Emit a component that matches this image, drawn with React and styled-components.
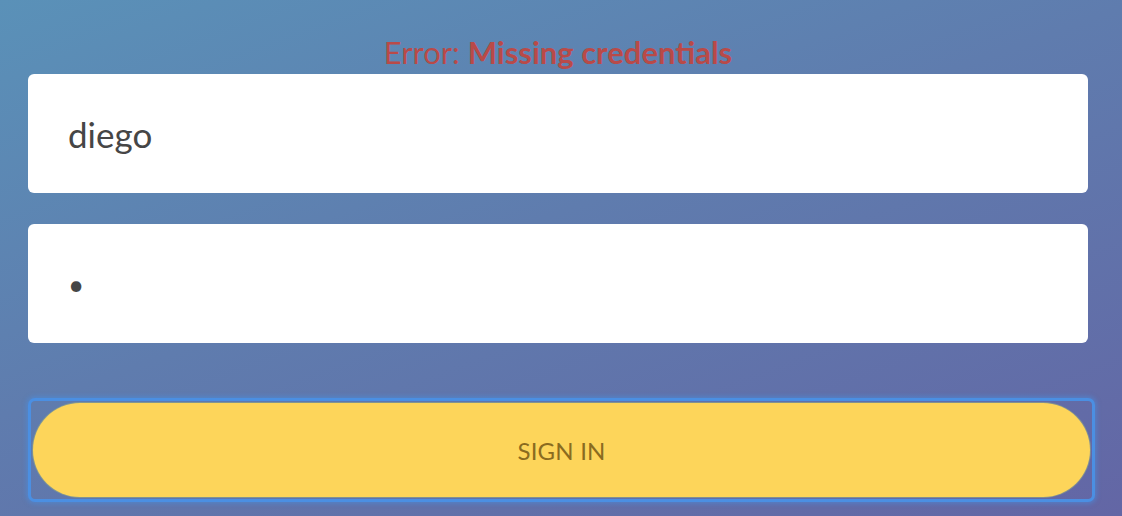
import React from 'react';
import styled, { createGlobalStyle } from 'styled-components';

const GlobalStyle = createGlobalStyle`
  html, body {
    margin: 0;
    padding: 0;
  }
  body {
    font-family: Lato, "Open Sans", sans-serif;
  }
`;

const Page = styled.div`
  width: 1122px;
  height: 516px;
  overflow: hidden;
  box-sizing: border-box;
  padding: 34px 34px 0 28px;
  background: linear-gradient(160deg, #5a91b8 0%, #5f7cae 45%, #6366a5 100%);
`;

const Form = styled.form`
  display: flex;
  flex-direction: column;
  width: 1060px;
`;

const ErrorLine = styled.p`
  margin: 0 0 4px;
  height: 36px;
  line-height: 36px;
  text-align: center;
  font-size: 31px;
  font-weight: 400;
  color: #b94a48;
  & b {
    font-weight: 700;
  }
`;

const Field = styled.input`
  box-sizing: border-box;
  width: 100%;
  height: 119px;
  margin: 0 0 ${(props) => props.$gap}px;
  padding: 0 40px;
  border: none;
  border-radius: 6px;
  background: #fff;
  font-family: Lato, "Open Sans", sans-serif;
  font-size: ${(props) => (props.type === 'password' ? 28 : 35)}px;
  color: #464646;
  outline: none;
`;

const FocusRing = styled.div`
  margin-left: 3px;
  width: 1061px;
  padding: 2px;
  box-sizing: border-box;
  border-radius: 4px;
  box-shadow: 0 0 0 3px #4b8fe2, 0 0 4px 5px rgba(74, 143, 226, 0.5);
`;

const SubmitButton = styled.button`
  display: block;
  width: 100%;
  height: 94px;
  border: none;
  border-radius: 47px;
  background: #fdd55a;
  box-shadow: 0 0 0 1px rgba(150, 170, 130, 0.6);
  font-family: Lato, "Open Sans", sans-serif;
  font-size: 24px;
  color: #8a6b1f;
  letter-spacing: 0.2px;
  cursor: pointer;
`;

const App = () => {
  return (
    <>
      <GlobalStyle />
      <Page>
        <Form>
          <ErrorLine>
            Error: <b>Missing credentials</b>
          </ErrorLine>
          <Field type="text" value="diego" readOnly $gap={31} />
          <Field type="password" value="a" readOnly $gap={58} />
          <FocusRing>
            <SubmitButton type="button">SIGN IN</SubmitButton>
          </FocusRing>
        </Form>
      </Page>
    </>
  );
};

export default App;
